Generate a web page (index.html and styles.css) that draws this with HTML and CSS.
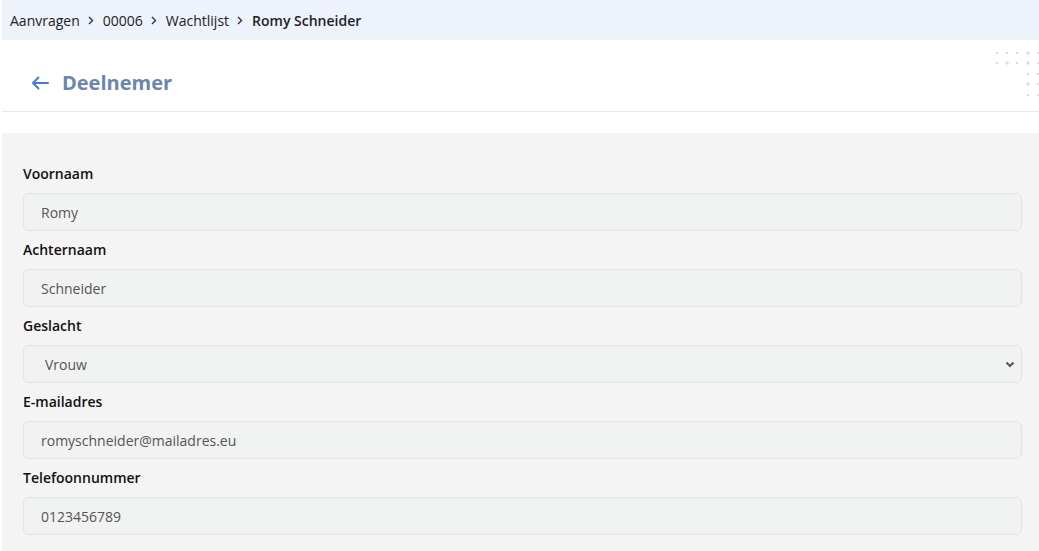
FILE: index.html
```html
<!DOCTYPE html>
<html lang="nl">
<head>
  <meta charset="UTF-8" />
  <title>Deelnemer</title>
  <link rel="stylesheet" href="styles.css">
</head>
<body>

<div class="page">
  <!-- Breadcrumb -->
  <nav class="crumbs">
    <span>Aanvragen</span>
    <svg class="sep" width="6" height="9" viewBox="0 0 6 9"><path d="M1 1l3.5 3.5L1 8" fill="none" stroke="#333" stroke-width="1.4"/></svg>
    <span>00006</span>
    <svg class="sep" width="6" height="9" viewBox="0 0 6 9"><path d="M1 1l3.5 3.5L1 8" fill="none" stroke="#333" stroke-width="1.4"/></svg>
    <span>Wachtlijst</span>
    <svg class="sep" width="6" height="9" viewBox="0 0 6 9"><path d="M1 1l3.5 3.5L1 8" fill="none" stroke="#333" stroke-width="1.4"/></svg>
    <span class="current">Romy Schneider</span>
  </nav>

  <!-- Header -->
  <header class="head">
    <a href="#" class="back">
      <svg width="18" height="14" viewBox="0 0 18 14"><path d="M17 7H2M7.5 1.5L2 7l5.5 5.5" fill="none" stroke="#3f7fd9" stroke-width="2" stroke-linecap="round" stroke-linejoin="round"/></svg>
    </a>
    <h1 class="title">Deelnemer</h1>
    <div class="dots">
      <i></i><i></i><i></i><i class="plus"></i><i></i>
      <i></i><i class="plus"></i><i></i><i class="plus"></i><i></i>
      <i class="gap"></i><i class="gap"></i><i class="gap"></i><i></i><i></i>
      <i class="gap"></i><i class="gap"></i><i class="gap"></i><i class="plus"></i><i></i>
      <i class="gap"></i><i class="gap"></i><i class="gap"></i><i></i><i></i>
    </div>
  </header>

  <!-- Form -->
  <section class="panel">
    <label class="label">Voornaam</label>
    <input class="field" type="text" value="Romy" readonly />

    <label class="label">Achternaam</label>
    <input class="field" type="text" value="Schneider" readonly />

    <label class="label">Geslacht</label>
    <div class="select-wrap">
      <select class="field select" disabled>
        <option>Vrouw</option>
      </select>
      <svg class="chev" width="10" height="7" viewBox="0 0 10 7"><path d="M1.5 1.5L5 5l3.5-3.5" fill="none" stroke="#555" stroke-width="2"/></svg>
    </div>

    <label class="label">E-mailadres</label>
    <input class="field" type="text" value="romyschneider@mailadres.eu" readonly />

    <label class="label">Telefoonnummer</label>
    <input class="field" type="text" value="0123456789" readonly />
  </section>
</div>

</body>
</html>
```

FILE: styles.css
```css
* {
  margin: 0;
  padding: 0;
  box-sizing: border-box;
}

body {
  font-family: 'Open Sans', 'Noto Sans', sans-serif;
  background-color: #fff;
  color: #222;
  padding-left: 2px;
  height: 551px;
  overflow: hidden;
}

.crumbs {
  height: 40px;
  background-color: #eef2fb;
  display: flex;
  align-items: center;
  padding-left: 8px;
  font-size: 14px;
  color: #222;
}

.crumbs .sep {
  margin: 0 9px 0 8px;
}

.crumbs .current {
  font-weight: 600;
}

.head {
  height: 72px;
  display: flex;
  align-items: center;
  padding-left: 29px;
  padding-top: 13px;
  border-bottom: 1px solid #e6eaf1;
  position: relative;
  overflow: hidden;
}

.back {
  display: flex;
  margin-right: 13px;
  margin-top: 1px;
}

.title {
  font-size: 20px;
  font-weight: 700;
  color: #6986b0;
}

.dots {
  position: absolute;
  top: 12px;
  right: 0;
  display: grid;
  grid-template-columns: repeat(5, 2px);
  grid-auto-rows: 2px;
  column-gap: 8.3px;
  row-gap: 8.4px;
}

.dots i {
  display: block;
  width: 2px;
  height: 2px;
  background-color: #cfdcf3;
}

.dots i.plus {
  background-color: #d3def4;
  box-shadow: 1px 0 0 #e6edf9, -1px 0 0 #e6edf9, 0 1px 0 #e6edf9, 0 -1px 0 #e6edf9;
}

.dots i.gap {
  background: none;
}

.panel {
  margin-top: 21px;
  background-color: #f4f4f4;
  padding: 31px 17px 30px 21px;
  display: flex;
  flex-direction: column;
}

.label {
  font-size: 14px;
  font-weight: 600;
  line-height: 20px;
  color: #111;
  margin-bottom: 9px;
}

.field {
  display: block;
  width: 100%;
  height: 38px;
  border: 1px solid #e1e3e5;
  border-radius: 6px;
  background-color: #f1f2f2;
  padding: 0 17px;
  font-family: inherit;
  font-size: 14px;
  color: #555;
  margin-bottom: 9px;
  outline: none;
}

.select-wrap {
  position: relative;
  height: 38px;
  margin-bottom: 9px;
}

.select {
  appearance: none;
  -webkit-appearance: none;
  padding-left: 21px;
  opacity: 1;
  margin-bottom: 0;
}

.chev {
  position: absolute;
  right: 7px;
  top: 16px;
}
```
